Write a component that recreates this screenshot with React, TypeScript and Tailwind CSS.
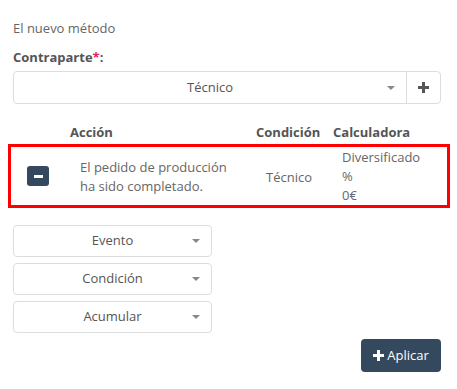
import React from "react";

const Caret = () => (
  <span className="absolute right-[11px] top-1/2 -translate-y-1/2 w-0 h-0 border-l-[4px] border-r-[4px] border-t-[4px] border-l-transparent border-r-transparent border-t-[#888]" />
);

const SmallSelect = ({ label }: { label: string }) => (
  <div className="relative w-[199px] h-[32px] border border-[#ddd] rounded-[4px] bg-white flex items-center justify-center text-[13px] text-[#555]">
    <span>{label}</span>
    <Caret />
  </div>
);

export default function App() {
  return (
    <div className="w-[457px] h-[389px] bg-white text-[13px] text-[#555] relative" style={{ fontFamily: '"Open Sans", sans-serif' }}>
      <div className="pl-[13px] pr-[16px] pt-[19px]">
        <div className="leading-[18px] text-[#666]">El nuevo método</div>
        <div className="mt-[11px] font-bold leading-[18px] text-[#555]">
          Contraparte<span className="text-[#e0245e]">*</span>:
        </div>
        <div className="mt-[5px] flex h-[33px] border border-[#ddd] rounded-[4px]">
          <div className="relative flex-1 flex items-center justify-center text-[#555]">
            Técnico
            <Caret />
          </div>
          <div className="w-[34px] border-l border-[#ddd] flex items-center justify-center">
            <svg width="11" height="11" viewBox="0 0 11 11">
              <rect x="4" y="0" width="3" height="11" fill="#555" />
              <rect x="0" y="4" width="11" height="3" fill="#555" />
            </svg>
          </div>
        </div>
      </div>
      <div className="mt-[19px] flex font-bold leading-[18px] text-[#555]">
        <div className="w-[70px]" />
        <div className="w-[186px]">Acción</div>
        <div className="w-[77px]">Condición</div>
        <div>Calculadora</div>
      </div>
      <div className="mt-[3px] ml-[8px] w-[442px] h-[64px] border-[3px] border-[#ff0000] flex items-center text-[#666]">
        <div className="w-[69px] flex justify-start pl-[16px]">
          <div className="w-[22px] h-[20px] rounded-[3px] bg-[#34495e] flex items-center justify-center">
            <div className="w-[9px] h-[3px] bg-white" />
          </div>
        </div>
        <div className="w-[186px] leading-[19px] pt-[2px]">
          El pedido de producción<br />ha sido completado.
        </div>
        <div className="w-[76px] pt-[3px]">Técnico</div>
        <div className="leading-[19px]">
          Diversificado<br />%<br />0€
        </div>
      </div>
      <div className="mt-[17px] ml-[13px] flex flex-col gap-[6px]">
        <SmallSelect label="Evento" />
        <SmallSelect label="Condición" />
        <SmallSelect label="Acumular" />
      </div>
      <div className="flex justify-end pr-[16px] mt-[6px]">
        <div className="w-[80px] h-[33px] rounded-[4px] bg-[#34495e] text-white flex items-center justify-center gap-[3px]">
          <svg width="11" height="11" viewBox="0 0 11 11">
            <rect x="4" y="0" width="3" height="11" fill="#fff" />
            <rect x="0" y="4" width="11" height="3" fill="#fff" />
          </svg>
          <span>Aplicar</span>
        </div>
      </div>
    </div>
  );
}
